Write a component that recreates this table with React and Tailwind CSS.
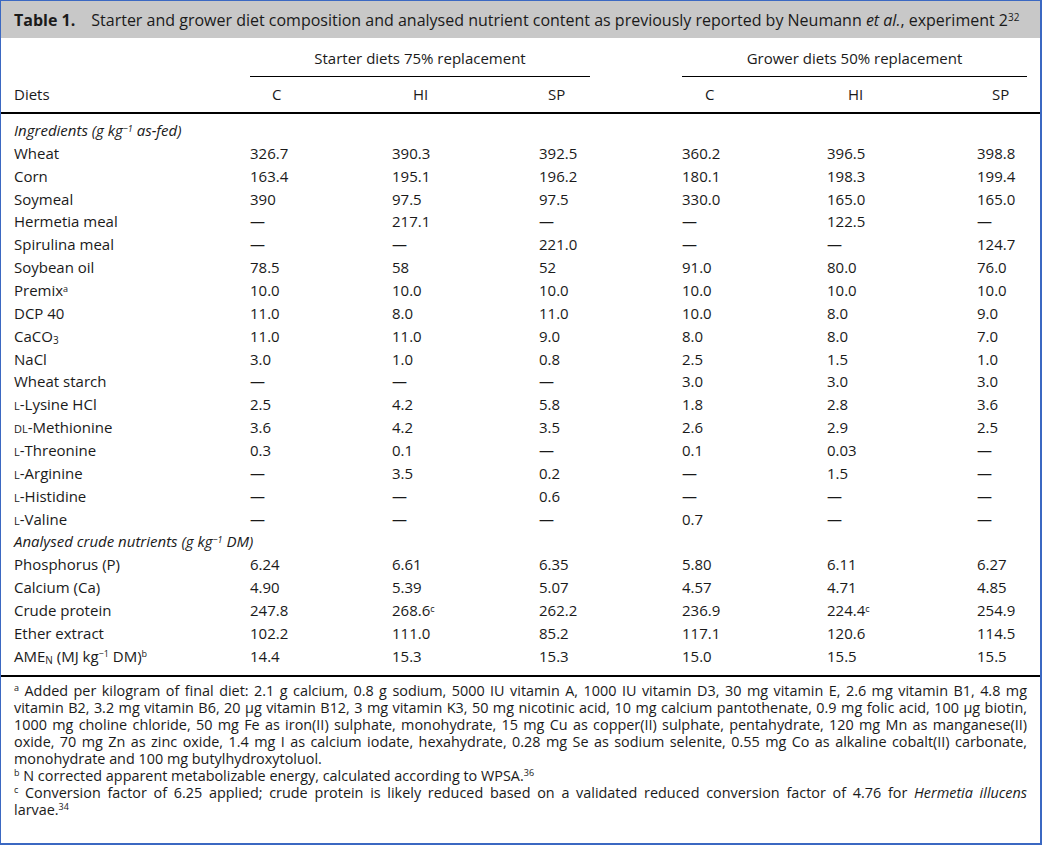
import React from "react";

const SC = ({ children }) => (
  <span className="[font-variant:small-caps]">{children}</span>
);

const rows = [
  { label: <i>Ingredients (g kg<sup className="text-[9px]">−1</sup> as-fed)</i>, section: true },
  { label: "Wheat", v: ["326.7", "390.3", "392.5", "360.2", "396.5", "398.8"] },
  { label: "Corn", v: ["163.4", "195.1", "196.2", "180.1", "198.3", "199.4"] },
  { label: "Soymeal", v: ["390", "97.5", "97.5", "330.0", "165.0", "165.0"] },
  { label: "Hermetia meal", v: ["—", "217.1", "—", "—", "122.5", "—"] },
  { label: "Spirulina meal", v: ["—", "—", "221.0", "—", "—", "124.7"] },
  { label: "Soybean oil", v: ["78.5", "58", "52", "91.0", "80.0", "76.0"] },
  { label: <>Premix<sup className="text-[9px]">a</sup></>, v: ["10.0", "10.0", "10.0", "10.0", "10.0", "10.0"] },
  { label: "DCP 40", v: ["11.0", "8.0", "11.0", "10.0", "8.0", "9.0"] },
  { label: <>CaCO<sub className="text-[10px]">3</sub></>, v: ["11.0", "11.0", "9.0", "8.0", "8.0", "7.0"] },
  { label: "NaCl", v: ["3.0", "1.0", "0.8", "2.5", "1.5", "1.0"] },
  { label: "Wheat starch", v: ["—", "—", "—", "3.0", "3.0", "3.0"] },
  { label: <><SC>l</SC>-Lysine HCl</>, v: ["2.5", "4.2", "5.8", "1.8", "2.8", "3.6"] },
  { label: <><SC>dl</SC>-Methionine</>, v: ["3.6", "4.2", "3.5", "2.6", "2.9", "2.5"] },
  { label: <><SC>l</SC>-Threonine</>, v: ["0.3", "0.1", "—", "0.1", "0.03", "—"] },
  { label: <><SC>l</SC>-Arginine</>, v: ["—", "3.5", "0.2", "—", "1.5", "—"] },
  { label: <><SC>l</SC>-Histidine</>, v: ["—", "—", "0.6", "—", "—", "—"] },
  { label: <><SC>l</SC>-Valine</>, v: ["—", "—", "—", "0.7", "—", "—"] },
  { label: <i>Analysed crude nutrients (g kg<sup className="text-[9px]">−1</sup> DM)</i>, section: true },
  { label: "Phosphorus (P)", v: ["6.24", "6.61", "6.35", "5.80", "6.11", "6.27"] },
  { label: "Calcium (Ca)", v: ["4.90", "5.39", "5.07", "4.57", "4.71", "4.85"] },
  {
    label: "Crude protein",
    v: [
      "247.8",
      <>268.6<sup className="text-[9px]">c</sup></>,
      "262.2",
      "236.9",
      <>224.4<sup className="text-[9px]">c</sup></>,
      "254.9",
    ],
  },
  { label: "Ether extract", v: ["102.2", "111.0", "85.2", "117.1", "120.6", "114.5"] },
  {
    label: (
      <>
        AME<sub className="text-[10px]">N</sub> (MJ kg<sup className="text-[9px]">−1</sup> DM)<sup className="text-[9px]">b</sup>
      </>
    ),
    v: ["14.4", "15.3", "15.3", "15.0", "15.5", "15.5"],
  },
];

const GRID = "grid grid-cols-[236px_142px_147px_143px_145px_150px_1fr]";
const headPad = ["pl-[22px]", "pl-[21px]", "pl-[9px]", "pl-[23px]", "pl-[21px]", "pl-[15px]"];

export default function App() {
  return (
    <div
      className="w-[1042px] h-[845px] bg-white text-[#1a1a1a] border-[#3b68c2] border-l border-t border-r-2 border-b-2 flex flex-col overflow-hidden"
      style={{ fontFamily: '"Open Sans", "Noto Sans", sans-serif' }}
    >
      {/* caption */}
      <div className="h-[37px] bg-[#c8c8c8] flex items-center px-[13px] text-[16px] leading-none whitespace-nowrap">
        <b className="font-bold">Table 1.</b>
        <span className="ml-[16px]">
          Starter and grower diet composition and analysed nutrient content as previously reported by Neumann <i>et al.</i>,
          experiment 2<sup className="text-[10px]">32</sup>
        </span>
      </div>

      {/* header */}
      <div className="text-[15px]">
        <div className={`${GRID} px-[13px] pt-[10px]`}>
          <div />
          <div className="col-span-3 mr-[92px] border-b border-black h-[29px] text-center leading-[20px]">
            Starter diets 75% replacement
          </div>
          <div className="col-span-3 border-b border-black h-[29px] text-center leading-[20px]">
            Grower diets 50% replacement
          </div>
        </div>
        <div className={`${GRID} px-[13px] pt-[7px] pb-[8px] leading-[20px]`}>
          <div>Diets</div>
          {["C", "HI", "SP", "C", "HI", "SP"].map((h, i) => (
            <div key={i} className={headPad[i]}>
              {h}
            </div>
          ))}
        </div>
        <div className="h-[2px] bg-black" />

        {/* body */}
        <div className="px-[13px] pt-[5px] pb-[7px]">
          {rows.map((r, i) => (
            <div key={i} className={`${GRID} h-[22.87px] leading-[22.87px] whitespace-nowrap`}>
              {r.section ? (
                <div className="col-span-7">{r.label}</div>
              ) : (
                <>
                  <div>{r.label}</div>
                  {r.v.map((x, j) => (
                    <div key={j}>{x}</div>
                  ))}
                </>
              )}
            </div>
          ))}
        </div>
        <div className="h-[2px] bg-black" />
      </div>

      {/* footnotes */}
      <div className="px-[13px] pt-[5px] text-[14.4px] leading-[17px] text-justify">
        <p>
          <sup className="text-[9px]">a</sup>&nbsp;Added per kilogram of final diet: 2.1 g calcium, 0.8 g sodium, 5000 IU vitamin A, 1000 IU
          vitamin D3, 30 mg vitamin E, 2.6 mg vitamin B1, 4.8 mg vitamin B2, 3.2 mg vitamin B6, 20 µg vitamin B12, 3 mg vitamin
          K3, 50 mg nicotinic acid, 10 mg calcium pantothenate, 0.9 mg folic acid, 100 µg biotin, 1000 mg choline chloride, 50 mg
          Fe as iron(II) sulphate, monohydrate, 15 mg Cu as copper(II) sulphate, pentahydrate, 120 mg Mn as manganese(II) oxide,
          70 mg Zn as zinc oxide, 1.4 mg I as calcium iodate, hexahydrate, 0.28 mg Se as sodium selenite, 0.55 mg Co as alkaline
          cobalt(II) carbonate, monohydrate and 100 mg butylhydroxytoluol.
        </p>
        <p>
          <sup className="text-[9px]">b</sup>&nbsp;N corrected apparent metabolizable energy, calculated according to WPSA.
          <sup className="text-[9px]">36</sup>
        </p>
        <p>
          <span className="block [text-align-last:justify]">
            <sup className="text-[9px]">c</sup>&nbsp;Conversion factor of 6.25 applied; crude protein is likely reduced based on a
            validated reduced conversion factor of 4.76 for <i>Hermetia illucens</i>
          </span>
          <span className="block">
            larvae.<sup className="text-[9px]">34</sup>
          </span>
        </p>
      </div>
    </div>
  );
}
